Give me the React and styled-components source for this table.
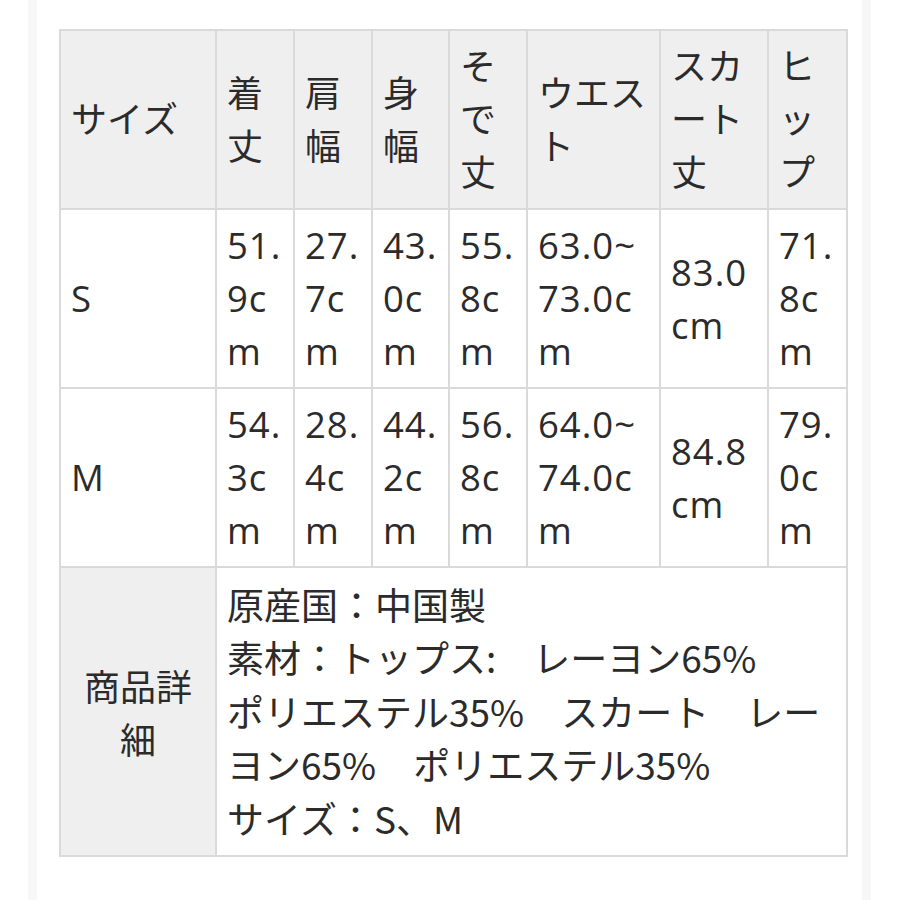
import React from "react";
import styled, { createGlobalStyle } from "styled-components";

const Global = createGlobalStyle`
  html, body { margin: 0; padding: 0; background: #ffffff; }
  body { font-family: "Open Sans", "Noto Sans CJK JP", sans-serif; color: #2b2b2b; }
`;

const Page = styled.div`
  width: 900px;
  height: 900px;
  box-sizing: border-box;
  padding-left: 28px;
  background: #fff;
  overflow: hidden;
`;

const Frame = styled.div`
  width: 843px;
  height: 900px;
  box-sizing: border-box;
  padding: 29px 0 0 22px;
  border-left: 9px solid #f7f7f7;
  border-right: 9px solid #f7f7f7;
`;

const Table = styled.table`
  border-collapse: collapse;
  table-layout: fixed;
  width: 787px;
  border: 2px solid #d2d2d2;
  font-size: 36px;
  line-height: 53px;
`;

const Cell = styled.td`
  border: 2px solid #dadada;
  padding: 0 10px;
  vertical-align: middle;
  text-align: ${(p) => (p.$center ? "center" : "left")};
  background: ${(p) => (p.$head ? "#efefef" : "#ffffff")};
  word-break: break-all;
  line-break: anywhere;
  height: ${(p) => p.$h}px;
  box-sizing: border-box;
  font-weight: 400;
  font-family: ${(p) =>
    p.$jp ? `"Noto Sans CJK JP", sans-serif` : `"Open Sans", "Noto Sans CJK JP", sans-serif`};
`;

const Value = styled(Cell)`
  font-size: 36.5px;
  letter-spacing: 1px;
`;

const Detail = styled(Cell)`
  font-size: 37px;
  line-height: 53.5px;
  padding: 0 10px;
`;

const widths = [156, 78, 78, 77, 78, 133, 108, 79];
const heads = ["サイズ", "着丈", "肩幅", "身幅", "そで丈", "ウエスト", "スカート丈", "ヒップ"];
const rows = [
  ["S", "51.9cm", "27.7cm", "43.0cm", "55.8cm", "63.0~73.0cm", "83.0cm", "71.8cm"],
  ["M", "54.3cm", "28.4cm", "44.2cm", "56.8cm", "64.0~74.0cm", "84.8cm", "79.0cm"],
];

export default function App() {
  return (
    <>
      <Global />
      <Page>
        <Frame>
          <Table>
            <colgroup>
              {widths.map((w, i) => (
                <col key={i} style={{ width: w }} />
              ))}
            </colgroup>
            <tbody>
              <tr>
                {heads.map((h) => (
                  <Cell as="th" key={h} $head $h={179}>
                    {h}
                  </Cell>
                ))}
              </tr>
              {rows.map((r) => (
                <tr key={r[0]}>
                  {r.map((c, i) => (
                    <Value key={i} $h={179}>
                      {c}
                    </Value>
                  ))}
                </tr>
              ))}
              <tr>
                <Cell $head $center $jp $h={289}>
                  商品詳細
                </Cell>
                <Detail colSpan={7} $jp $h={289}>
                  原産国：中国製
                  <br />
                  素材：トップス:　レーヨン65%
                  <br />
                  ポリエステル35%　スカート　レーヨン65%　ポリエステル35%
                  <br />
                  サイズ：S、M
                </Detail>
              </tr>
            </tbody>
          </Table>
        </Frame>
      </Page>
    </>
  );
}
